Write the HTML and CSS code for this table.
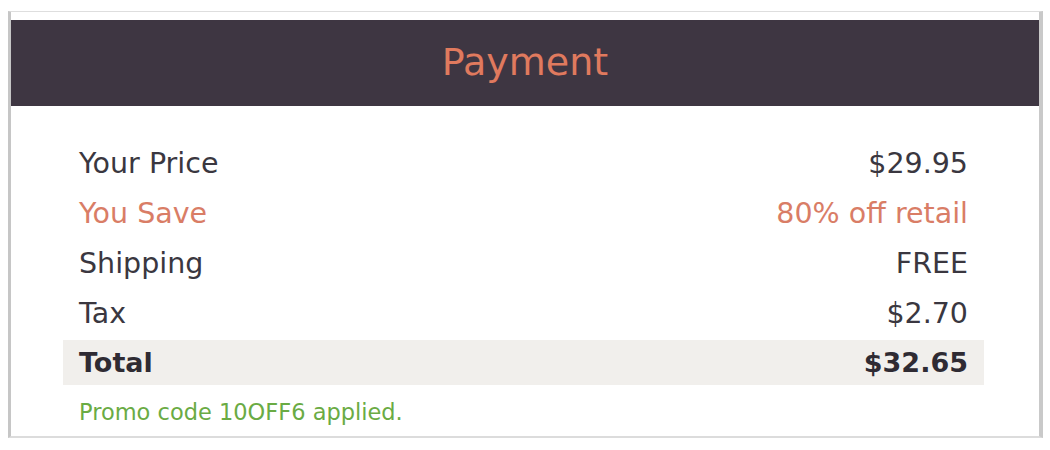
FILE: index.html
```html
<!DOCTYPE html>
<html>
<head>
<meta charset="utf-8">
<link rel="stylesheet" href="styles.css">
</head>
<body>
<div class="card">
  <div class="header"><h1 class="title">Payment</h1></div>
  <div class="body">
    <div class="row"><span>Your Price</span><span>$29.95</span></div>
    <div class="row save"><span>You Save</span><span>80% off retail</span></div>
    <div class="row"><span>Shipping</span><span>FREE</span></div>
    <div class="row"><span>Tax</span><span>$2.70</span></div>
    <div class="row total"><span>Total</span><span>$32.65</span></div>
    <p class="promo">Promo code 10OFF6 applied.</p>
  </div>
</div>
</body>
</html>
```
FILE: styles.css
```css
html, body { margin: 0; padding: 0; background: #fff; }
body { font-family: "DejaVu Sans", "Open Sans", sans-serif; color: #3a3740; }
.card {
  margin: 11px 0 0 8px;
  width: 1028px;
  border-top: 1px solid #dedede;
  border-bottom: 2px solid #dcdcdc;
  border-left: 3px solid #c6c6c6;
  border-right: 4px solid #c9c9c9;
  padding-top: 8px;
  box-sizing: content-box;
}
.header {
  height: 86px;
  box-sizing: border-box;
  padding-bottom: 2px;
  background: #3e3642;
  display: flex;
  align-items: center;
  justify-content: center;
}
.title {
  margin: 0;
  font-size: 38px;
  font-weight: 400;
  color: #e07a5e;
}
.body { padding: 34px 55px 10px 52px; }
.row {
  height: 50px;
  box-sizing: border-box;
  padding: 0 16px 4px;
  display: flex;
  justify-content: space-between;
  align-items: center;
  font-size: 28.5px;
}
.row.save { color: #d97d66; }
.row.total {
  height: 45px;
  padding-bottom: 0;
  background: #f1efec;
  font-weight: 700;
  font-size: 27px;
  color: #2f2b33;
}
.promo {
  margin: 13px 0 0 16px;
  font-size: 22.5px;
  line-height: 28px;
  color: #6aab44;
}
```
